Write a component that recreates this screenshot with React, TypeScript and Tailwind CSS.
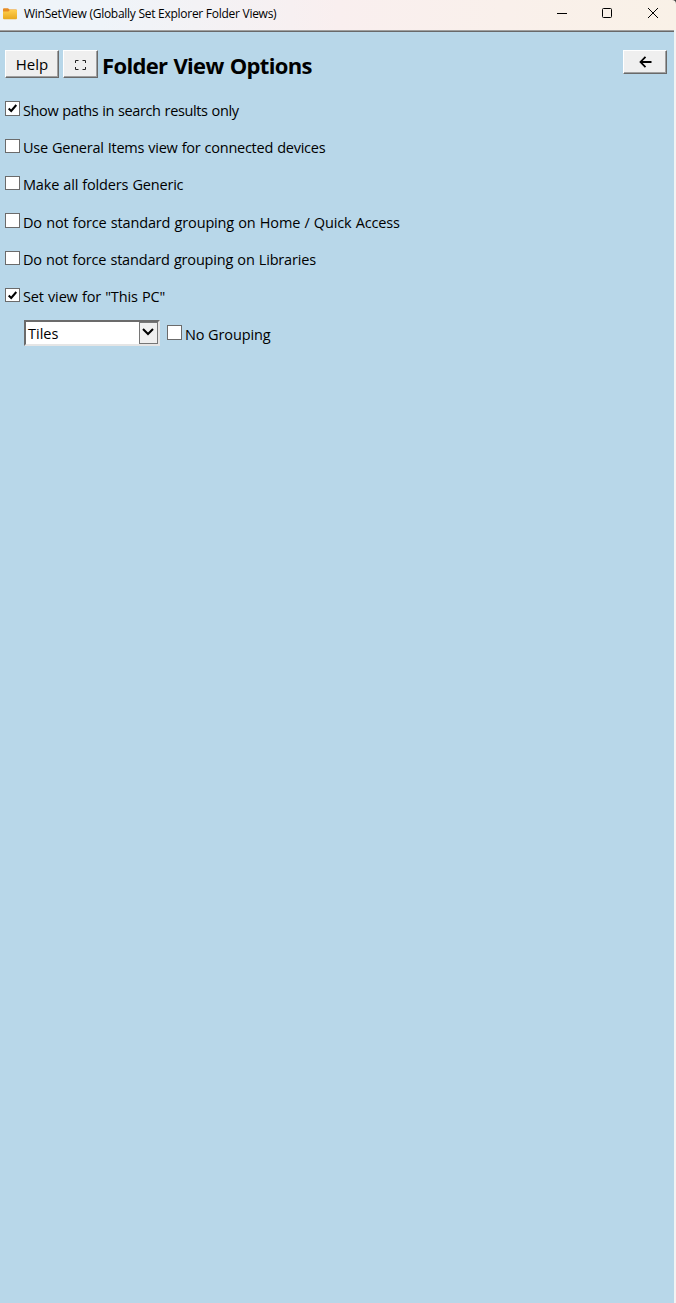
import React from "react";

const bevel =
  "box-border flex shrink-0 items-center justify-center border border-t-white border-l-white border-r-[#696969] border-b-[#696969] bg-[#efefef] text-black shadow-[inset_-1px_-1px_0_#a0a0a0]";

function Box({ checked = false, tall = false }: { checked?: boolean; tall?: boolean }) {
  return (
    <span
      role="checkbox"
      aria-checked={checked}
      className={`flex w-[15px] shrink-0 items-center justify-center border border-[#6b6b6b] bg-white ${tall ? "h-[15px]" : "h-[14px]"}`}
    >
      {checked && (
        <svg width="11" height="11" viewBox="0 0 11 11" fill="none" stroke="#000" strokeWidth="2">
          <path d="M1.7 5.5 4.2 8 9.3 2" />
        </svg>
      )}
    </span>
  );
}

const rows = [
  { text: "Show paths in search results only", checked: true, tall: true, height: "h-[38px]", track: "leading-[20px] tracking-[-0.38px]" },
  { text: "Use General Items view for connected devices", height: "h-[37px]", track: "leading-[18px] tracking-[-0.25px]" },
  { text: "Make all folders Generic", height: "h-[37px]", track: "leading-[18px] tracking-[-0.18px]" },
  { text: "Do not force standard grouping on Home / Quick Access", tall: true, height: "h-[38px]", track: "leading-[20px] tracking-[-0.15px]" },
  { text: "Do not force standard grouping on Libraries", height: "h-[37px]", track: "leading-[18px] tracking-[-0.18px]" },
  { text: "Set view for \"This PC\"", checked: true, height: "h-[32px]", track: "leading-[18px] tracking-[-0.15px]" },
];

export default function App() {
  return (
    <div className="flex h-[1303px] w-[676px] flex-col overflow-hidden bg-[#f3f3f3] font-['Open_Sans','Noto_Sans',sans-serif] text-black">
      <div className="shrink-0 bg-[#3c3c3c]">
        <header className="flex h-[30px] items-start rounded-tr-[4px] bg-linear-to-r from-[#eff4f9] from-15% via-[#f9efef] via-50% to-[#f9f1e7]">
          <svg className="mt-[8px] ml-[3px] shrink-0" width="14" height="12" viewBox="0 0 14 12">
            <defs>
              <linearGradient id="folder" x1="0" y1="0" x2="0" y2="1">
                <stop offset="0" stopColor="#ffd050" />
                <stop offset="1" stopColor="#e8a91e" />
              </linearGradient>
            </defs>
            <path d="M0 1.2Q0 .3 1 .3H5L6.5 1.5H13Q14 1.5 14 2.5V5H0Z" fill="#e78c24" />
            <path d="M0 3.5H5.5L7 1.8H13Q14 1.8 14 2.8V10Q14 11.2 13 11.2H1Q0 11.2 0 10Z" fill="url(#folder)" />
          </svg>
          <span className="mt-[6px] ml-[7px] text-[12px] leading-[16px] tracking-[-0.27px] whitespace-nowrap">
            WinSetView (Globally Set Explorer Folder Views)
          </span>
          <div className="mt-[7px] mr-[17px] ml-auto flex gap-[34px]">
            <svg width="12" height="12" viewBox="0 0 12 12" stroke="#000" fill="none"><path d="M2 6.5H12" /></svg>
            <svg width="12" height="12" viewBox="0 0 12 12" stroke="#000" fill="none"><rect x="1.5" y="1.5" width="9" height="9" rx="1" /></svg>
            <svg width="12" height="12" viewBox="0 0 12 12" stroke="#000" fill="none"><path d="M1 1 11 11M11 1 1 11" /></svg>
          </div>
        </header>
      </div>
      <main className="mr-[2px] flex-1 border-t border-t-[#a0a0a0] bg-[#b8d7e9] shadow-[inset_0_1px_0_#696969]">
        <div className="flex items-start pt-[19px] pr-[7px] pl-[5px]">
          <button className={`${bevel} h-[28px] w-[54px] text-[15px] leading-[20px]`}>Help</button>
          <button className={`${bevel} ml-[4px] h-[28px] w-[35px]`}>
            <svg width="11" height="10" viewBox="0 0 11 10" fill="none" stroke="#222" className="mt-[2px]">
              <path d="M.5 3V.5H3.5M7.5 .5H10.5V3M10.5 7V9.5H7.5M3.5 9.5H.5V7" />
            </svg>
          </button>
          <h1 className="ml-[4px] text-[22px] leading-[30px] font-bold tracking-[-0.66px] [word-spacing:1px] whitespace-nowrap">
            Folder View Options
          </h1>
          <button className={`${bevel} ml-auto h-[24px] w-[44px]`}>
            <svg className="mb-[1px]" width="13" height="12" viewBox="0 0 13 12" fill="none" stroke="#000" strokeWidth="1.8">
              <path d="M12.5 6H1.5M6.5 .8 1.5 6 6.5 11.2" />
            </svg>
          </button>
        </div>
        <div className="pt-[21px] pl-[5px]">
          {rows.map((r) => (
            <div key={r.text} className={`flex items-start ${r.height}`}>
              <Box checked={r.checked} tall={r.tall} />
              <span className={`ml-[3px] text-[14.5px] [word-spacing:0.6px] whitespace-nowrap ${r.track}`}>{r.text}</span>
            </div>
          ))}
          <div className="ml-[19px] flex items-start">
            <div className="flex h-[26px] w-[136px] items-center justify-between border-2 border-t-[#6b6b6b] border-r-[#e5e5e5] border-b-[#e5e5e5] border-l-[#6b6b6b] bg-white">
              <span className="pt-[2px] pl-[2px] text-[14.5px] leading-[20px]">Tiles</span>
              <span className="flex h-[22px] w-[19px] items-center justify-center border border-[#767676] bg-[#efefef]">
                <svg className="mr-[1px] mb-[2px]" width="12" height="8" viewBox="0 0 12 8" fill="none" stroke="#000" strokeWidth="2"><path d="M1 1 6 6 11 1" /></svg>
              </span>
            </div>
            <div className="mt-[5px] ml-[7px] flex items-start">
              <Box tall />
              <span className="ml-[3px] text-[14.5px] leading-[20px] tracking-[-0.12px]">No Grouping</span>
            </div>
          </div>
        </div>
      </main>
    </div>
  );
}
